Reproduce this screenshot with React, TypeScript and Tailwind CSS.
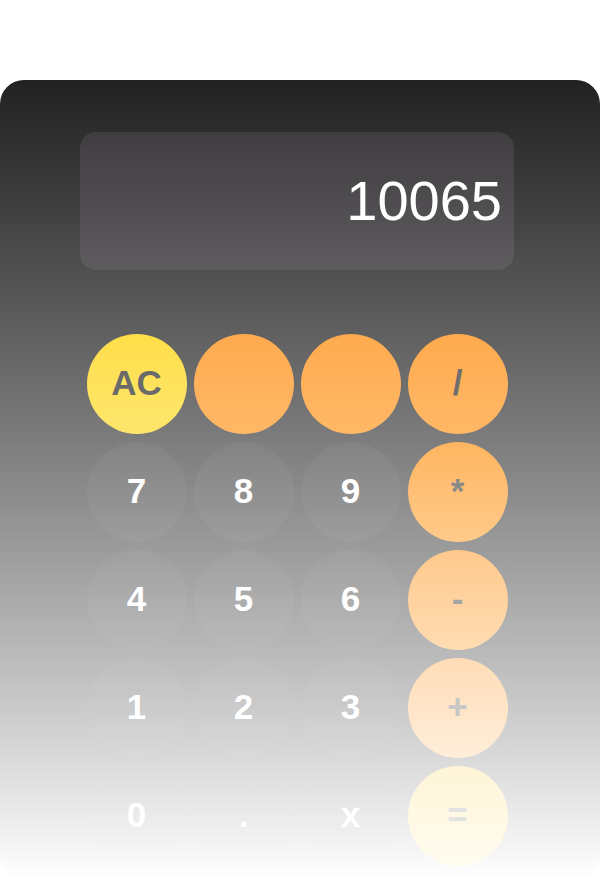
import React from "react";

type Key = {
    label: string;
    kind: "num" | "op" | "ac";
    // operator colours fade toward the bottom of the pad
    cls?: string;
};

const keys: Key[] = [
    { label: "AC", kind: "ac", cls: "bg-gradient-to-b from-[#ffde48] to-[#fde66c] text-[#6a6a6a]" },
    { label: "", kind: "op", cls: "bg-gradient-to-b from-[#ffaa4e] to-[#ffb866]" },
    { label: "", kind: "op", cls: "bg-gradient-to-b from-[#ffaa4e] to-[#ffb866]" },
    { label: "/", kind: "op", cls: "bg-gradient-to-b from-[#ffaa4e] to-[#ffb866] text-[#6e6e6e]" },
    { label: "7", kind: "num" },
    { label: "8", kind: "num" },
    { label: "9", kind: "num" },
    { label: "*", kind: "op", cls: "bg-gradient-to-b from-[#ffb560] to-[#ffca8a] text-[#8a8a8a]" },
    { label: "4", kind: "num" },
    { label: "5", kind: "num" },
    { label: "6", kind: "num" },
    { label: "-", kind: "op", cls: "bg-gradient-to-b from-[#ffc98c] to-[#ffdcb2] text-[#a6a6a6]" },
    { label: "1", kind: "num" },
    { label: "2", kind: "num" },
    { label: "3", kind: "num" },
    { label: "+", kind: "op", cls: "bg-gradient-to-b from-[#ffdcb6] to-[#ffeeda] text-[#c6c6c6]" },
    { label: "0", kind: "num" },
    { label: ".", kind: "num" },
    { label: "x", kind: "num" },
    { label: "=", kind: "op", cls: "bg-gradient-to-b from-[#fff5d6] to-[#fffcf0] text-[#e2e2e2]" },
];

export default function App() {
    return (
        <div className="w-[600px] h-[878px] overflow-hidden bg-white pt-[80px] font-['Liberation_Sans',Arial,sans-serif]">
            <div className="h-[800px] rounded-[24px] bg-gradient-to-b from-[#222222] to-white pt-[52px]">
                {/* Display */}
                <div className="ml-[80px] w-[434px] h-[138px] rounded-2xl bg-[rgba(240,225,250,0.09)] flex items-center justify-end pr-3">
                    <span className="text-[56px] leading-none text-white">10065</span>
                </div>

                {/* Keypad */}
                <div className="ml-[80px] w-[434px] mt-16 grid grid-cols-[repeat(4,100px)] justify-center gap-x-[7px] gap-y-2">
                    {keys.map((k, i) => (
                        <button
                            key={i}
                            className={`w-[100px] h-[100px] rounded-full flex items-center justify-center pb-1 text-[35px] font-bold leading-none ${k.kind === "num" ? "bg-[rgba(240,230,250,0.05)] text-white" : k.cls}`}
                        >
                            {k.label}
                        </button>
                    ))}
                </div>
            </div>
        </div>
    );
}
